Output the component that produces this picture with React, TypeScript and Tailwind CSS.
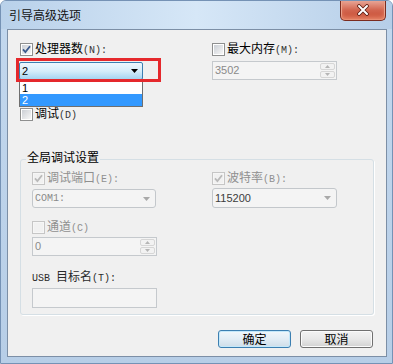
import type { ReactNode } from 'react'

// 引导高级选项 — Win7 msconfig 对话框

const zh = "font-['Noto_Sans_CJK_SC','Microsoft_YaHei',sans-serif]"
const mono = "font-['Liberation_Mono','Courier_New',monospace] text-[10px] tracking-[0px]"
const sans = "font-['Liberation_Sans',Arial,sans-serif] text-[11px]"

function Box({ on, off }: { on?: boolean; off?: boolean }) {
  return (
    <span
      className={`relative flex size-[13px] shrink-0 items-center justify-center border ${
        off ? 'border-[#c6c6c6] bg-[#f6f6f6]' : 'border-[#8e8f8f] bg-white'
      }`}
    >
      <span
        className={`size-[9px] ${
          off ? 'bg-[#f1f1f1]' : 'bg-gradient-to-br from-[#cbcfd5] to-[#f7f7f7]'
        }`}
      />
      {on && (
        <svg className="absolute inset-0" width="11" height="11" viewBox="0 0 11 11">
          <path
            d="M2 5.4 L4.4 8 L9 2.2"
            fill="none"
            stroke={off ? '#b9b9b9' : '#3b5a8d'}
            strokeWidth="1.8"
          />
        </svg>
      )}
    </span>
  )
}

function Lbl({ text, acc, gray }: { text: string; acc: string; gray?: boolean }) {
  return (
    <span className={`leading-[12px] whitespace-nowrap ${gray ? 'text-[#8f8f8f]' : 'text-black'}`}>
      <span className={`${zh} text-[12px]`}>{text}</span>
      <span className={`${mono} ${gray ? '' : 'text-[#333333]'}`}>{acc}</span>
    </span>
  )
}

function CheckRow({ on, off, children }: { on?: boolean; off?: boolean; children: ReactNode }) {
  return (
    <div className="flex h-[13px] items-center gap-[2px]">
      <Box on={on} off={off} />
      {children}
    </div>
  )
}

function Arrow({ color }: { color: string }) {
  return (
    <svg width="7" height="4" viewBox="0 0 7 4">
      <path d="M0 0 H7 L3.5 4 Z" fill={color} />
    </svg>
  )
}

function Spin({ value }: { value: string }) {
  return (
    <div className="flex h-[19px] w-[125px] border border-[#c5c9cd] bg-[#f4f4f4]">
      <span className={`${sans} flex-1 pl-[2px] leading-[17px] text-[#8a8a8a]`}>{value}</span>
      <div className="my-[1px] mr-[1px] flex w-[15px] flex-col gap-px">
        <span className="flex flex-1 items-center justify-center rounded-[2px] border border-[#d6d6d6] bg-[#f2f2f2]">
          <svg width="5" height="3" viewBox="0 0 5 3">
            <path d="M0 3 H5 L2.5 0 Z" fill="#b5b5b5" />
          </svg>
        </span>
        <span className="flex flex-1 items-center justify-center rounded-[2px] border border-[#d6d6d6] bg-[#f2f2f2]">
          <svg width="5" height="3" viewBox="0 0 5 3">
            <path d="M0 0 H5 L2.5 3 Z" fill="#b5b5b5" />
          </svg>
        </span>
      </div>
    </div>
  )
}

function Btn({ label, primary }: { label: string; primary?: boolean }) {
  return (
    <div
      className={`${zh} flex h-[18px] w-[73px] items-center justify-center rounded-[3px] border text-[12px] leading-[12px] text-black ${
        primary
          ? 'border-[#3c7fb1] bg-gradient-to-b from-[#f1f7fb] via-[#e2edf5] to-[#cfdde8] shadow-[inset_0_0_0_1px_#c4e8fa]'
          : 'border-[#707070] bg-gradient-to-b from-[#f3f3f3] via-[#e8e8e8] to-[#d2d2d2] shadow-[inset_0_0_0_1px_#fbfbfb]'
      }`}
    >
      {label}
    </div>
  )
}

function CloseButton() {
  return (
    <div className="-mt-px flex h-[21px] w-[46px] items-center justify-center rounded-b-[5px] border border-t-0 border-[#7a2c20] bg-gradient-to-b from-[#e9ab9d] via-[#d2654f] to-[#c5472f] shadow-[inset_0_-3px_4px_#e7876a,inset_0_0_0_1px_#efb6a6]">
      <svg width="14" height="12" viewBox="0 0 14 12">
        <path d="M3 2 L11 10 M11 2 L3 10" stroke="#5a1a10" strokeWidth="3.6" strokeLinecap="round" />
        <path d="M3 2 L11 10 M11 2 L3 10" stroke="#ffffff" strokeWidth="2" strokeLinecap="round" />
      </svg>
    </div>
  )
}

export default function App() {
  return (
    <div className={`${zh} h-[364px] w-[393px] text-[12px]`}>
      <div className="flex h-full w-full flex-col overflow-hidden rounded-t-[6px] border border-[#7592b5] bg-gradient-to-b from-[#c3d8ee] to-[#b7cee7]">
        {/* title bar */}
        <div className="flex h-[28px] shrink-0 items-start justify-between bg-gradient-to-r from-[#b9d1ea] via-[#d6e7f7] to-[#b6cee8] pl-[8px] pr-[6px]">
          <span className="mt-[8px] leading-[12px] text-[#141414]">引导高级选项</span>
          <CloseButton />
        </div>

        {/* client area */}
        <div className="ml-[6px] mr-[5px] flex h-[328px] shrink-0 flex-col border border-[#7c8fa6] bg-[#f0f0f0]">
          <div className="flex pl-[12px] pt-[13px]">
            <div className="flex w-[192px] flex-col">
              <CheckRow on>
                <Lbl text="处理器数" acc="(N):" />
              </CheckRow>
              <div className="relative mt-[6px] -ml-px w-[124px]">
                <div className="flex h-[18px] items-center justify-between rounded-[2px] border border-[#3c7fb1] bg-gradient-to-b from-[#eef7fd] via-[#d6edfa] to-[#a5d4f1] pl-[2px] pr-[4px]">
                  <span className={`${sans} leading-[16px] text-black`}>2</span>
                  <Arrow color="#000000" />
                </div>
                <div className="absolute left-0 top-[20px] z-10 w-[124px] border border-t-0 border-[#6f6f6f] bg-white">
                  <div className={`${sans} h-[12px] pl-[2px] leading-[12px] text-black`}>1</div>
                  <div className={`${sans} h-[12px] bg-[#3399ff] pl-[2px] leading-[12px] text-white`}>2</div>
                </div>
                <div className="absolute left-[-3px] top-[-4px] z-20 h-[24px] w-[145px] border-[3px] border-[#e5282c]" />
              </div>
              <div className="mt-[28px]">
                <CheckRow>
                  <Lbl text="调试" acc="(D)" />
                </CheckRow>
              </div>
            </div>
            <div className="flex flex-col">
              <CheckRow>
                <Lbl text="最大内存" acc="(M):" />
              </CheckRow>
              <div className="mt-[5px]">
                <Spin value="3502" />
              </div>
            </div>
          </div>

          {/* group box */}
          <div className="relative mx-[12px] mt-[38px] rounded-[3px] border border-[#d5dfe5] pb-[6px] pl-[11px] pt-[12px] shadow-[1px_1px_0_#ffffff]">
            <span className="absolute left-[5px] top-[-9px] bg-[#f0f0f0] px-[1px] leading-[12px] text-black">
              全局调试设置
            </span>
            <div className="flex">
              <div className="flex w-[180px] flex-col">
                <CheckRow on off>
                  <Lbl text="调试端口" acc="(E):" gray />
                </CheckRow>
                <div className="mt-[4px] flex h-[19px] w-[124px] items-center justify-between rounded-[3px] border border-[#c3c7cb] bg-[#f4f4f4] pl-[2px] pr-[5px]">
                  <span className={`${mono} leading-[17px] text-[#8a8a8a]`}>COM1:</span>
                  <Arrow color="#a9a9a9" />
                </div>
                <div className="mt-[13px]">
                  <CheckRow off>
                    <Lbl text="通道" acc="(C)" gray />
                  </CheckRow>
                </div>
                <div className="mt-[3px]">
                  <Spin value="0" />
                </div>
                <div className="mt-[14px] leading-[12px] text-[#2b2b2b]">
                  <span className={mono}>USB </span>
                  <span className="text-[12px]">目标名</span>
                  <span className={mono}>(T):</span>
                </div>
                <div className="mt-[3px] h-[20px] w-[125px] border border-[#c5c9cd] bg-[#f4f4f4]" />
              </div>
              <div className="flex flex-col">
                <CheckRow on off>
                  <Lbl text="波特率" acc="(B):" gray />
                </CheckRow>
                <div className="mt-[3px] flex h-[20px] w-[125px] items-center justify-between rounded-[3px] border border-[#c3c7cb] bg-[#f4f4f4] pl-[2px] pr-[5px]">
                  <span className={`${sans} leading-[18px] text-[#3c3c3c]`}>115200</span>
                  <Arrow color="#a9a9a9" />
                </div>
              </div>
            </div>
          </div>

          <div className="mt-[15px] flex justify-end gap-[9px] pr-[13px]">
            <Btn label="确定" primary />
            <Btn label="取消" />
          </div>
        </div>
      </div>
    </div>
  )
}
